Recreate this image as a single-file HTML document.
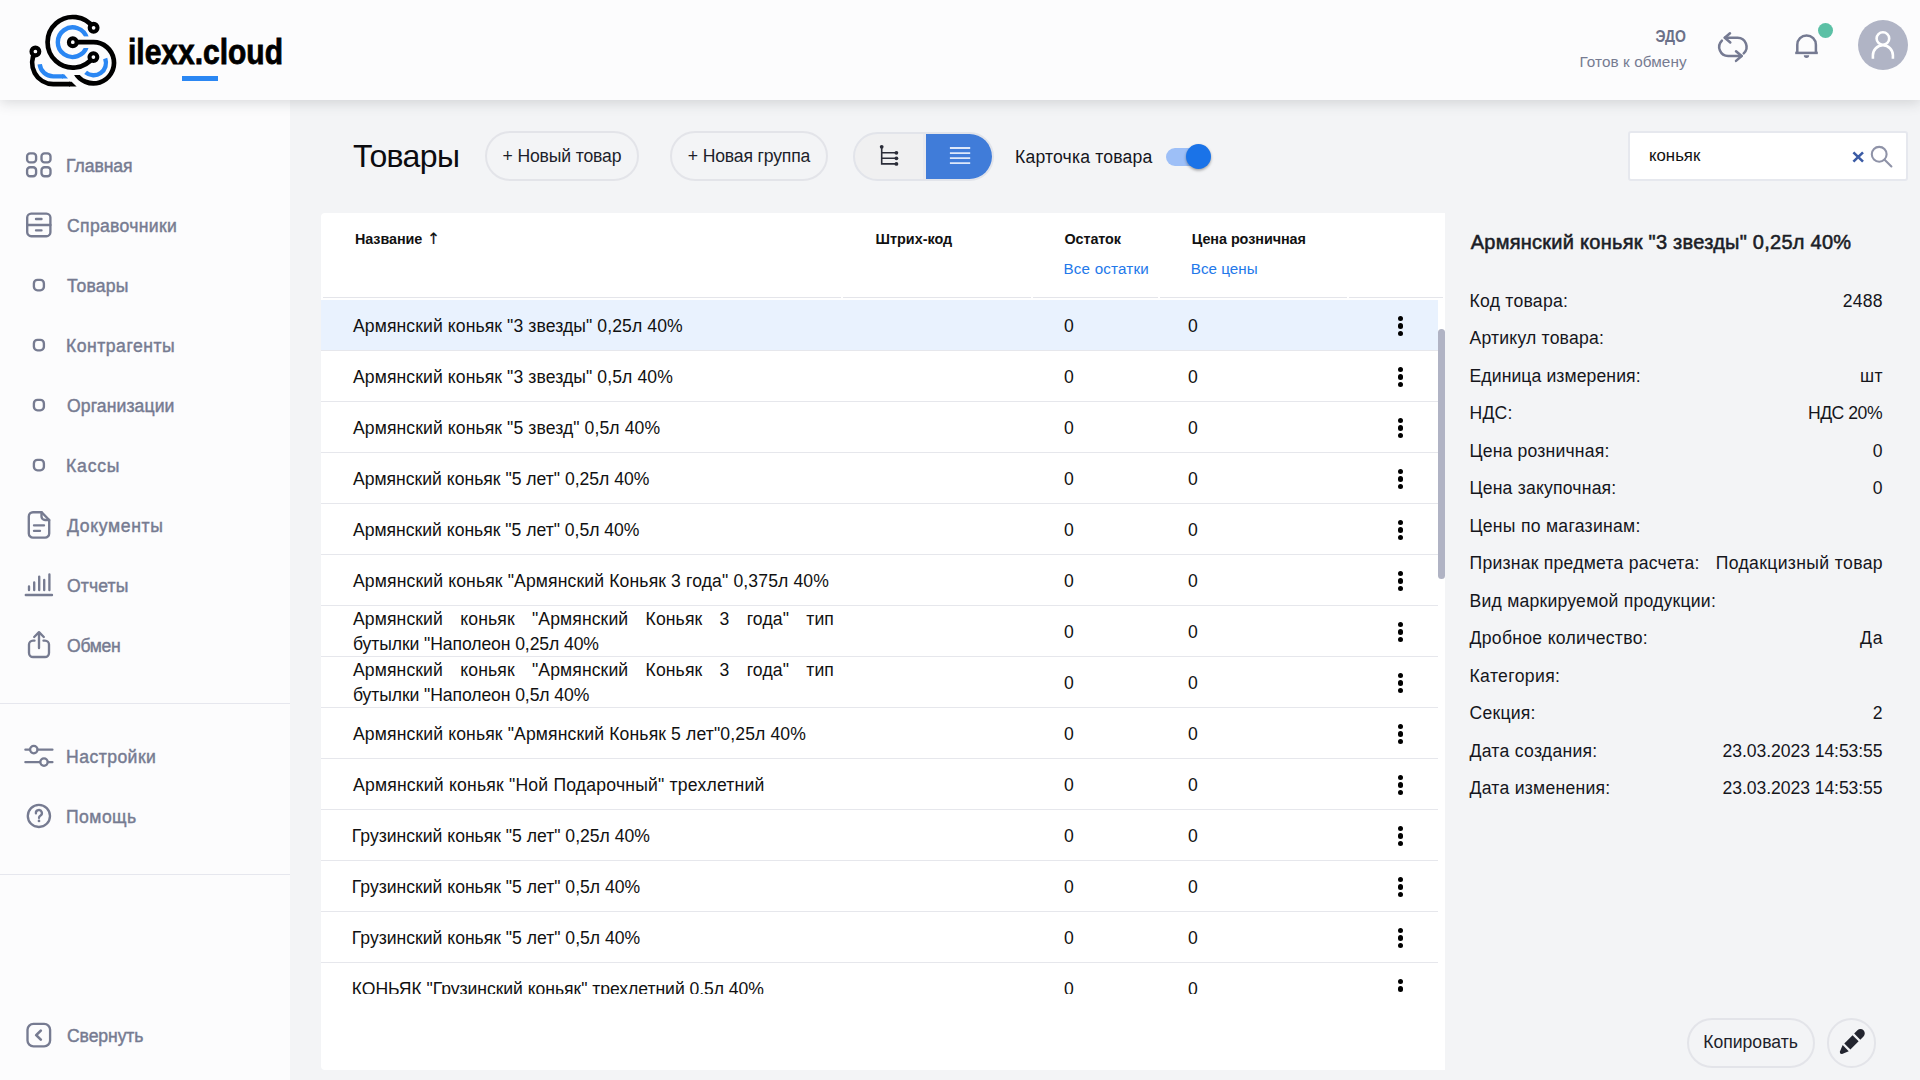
<!DOCTYPE html>
<html lang="ru">
<head>
<meta charset="utf-8">
<title>ilexx.cloud — Товары</title>
<style>
*{box-sizing:border-box;margin:0;padding:0}
html,body{width:1920px;height:1080px;overflow:hidden}
body{font-family:"Liberation Sans",sans-serif;background:#f3f4f6;color:#111;position:relative}
.abs{position:absolute}
.t{position:absolute;white-space:nowrap;line-height:1}
/* header */
#hdr{position:absolute;left:0;top:0;width:1920px;height:100px;background:#fcfcfd;box-shadow:0 3px 12px rgba(50,52,62,.17);z-index:5}
/* sidebar */
#side{position:absolute;left:0;top:100px;width:290px;height:980px;background:#fcfcfd;z-index:2}
.nav{position:absolute;font-size:17.6px;color:#767b91;white-space:nowrap;line-height:1;-webkit-text-stroke:.42px #767b91}
.sep{position:absolute;left:0;width:290px;height:1px;background:#e6e7ee}
.ico{position:absolute;fill:none;stroke:#767b91;stroke-width:2.35;stroke-linecap:round;stroke-linejoin:round;overflow:visible}
/* toolbar */
.pill{position:absolute;border:2px solid #e3e4e9;border-radius:30px}
/* table */
#card{position:absolute;left:321px;top:213px;width:1124px;height:857px;background:#fff;border-radius:4px 0 0 4px}
.th{position:absolute;font-weight:bold;white-space:nowrap;line-height:1;color:#111}
.lnk{position:absolute;color:#2378ea;white-space:nowrap;line-height:1}
#rows{position:absolute;left:0;top:87px;width:1117px;height:694px;overflow:hidden}
.row{position:absolute;left:0;width:1117px;height:51px;border-bottom:1px solid #e6e7ec}
.row.sel{background:#e9f2fe}
.row .n{position:absolute;left:32px;top:.6px;height:50px;width:481px;font-size:17.6px;letter-spacing:.11px;line-height:25px;display:flex;align-items:center;color:#111;white-space:nowrap}
.row .n span{display:block;width:100%}
.row .n .j{text-align:justify;text-align-last:justify;white-space:normal}
.row .n .l2{letter-spacing:-.1px}
.row .a,.row .b{position:absolute;top:1px;height:50px;line-height:50px;font-size:17.6px}
.row .a{left:743px}.row .b{left:867px}
.row .k{position:absolute;left:1076.7px;top:15.9px;width:6px;height:22px}
.row .k i{position:absolute;left:0;width:5.4px;height:5.4px;border-radius:50%;background:#000}
</style>
</head>
<body>
<div id="hdr">
<svg class="abs" style="left:24px;top:8px" width="100" height="84" viewBox="24 8 100 84" fill="none">
 <g stroke="#2b87f3" stroke-width="4.4" fill="none">
  <path d="M86.85 38.2 A14.8 14.8 0 1 0 86.85 46.2"/>
  <path d="M105.2 58.6 A12.4 12.4 0 0 1 85.6 72.4"/>
  <path d="M39.7 64.2 A13.6 13.6 0 0 0 53.2 76.4 H63"/>
 </g>
 <path d="M62 74.2 H64.2 L68 78.6 H62Z" fill="#2b87f3"/>
 <rect x="80" y="36.4" width="14" height="11.6" fill="#fcfcfd"/>
 <g stroke="#000" stroke-width="4.7" fill="none">
  <path d="M93.6 27.8 A25.3 25.3 0 1 0 93.4 57.1"/>
  <path d="M72.8 42.2 H93.4 A20.6 20.6 0 1 1 75 72"/>
  <path d="M35.4 51.5 A21.4 21.4 0 0 0 53.2 84.2 H70"/>
 </g>
 <path d="M69 81.85 H71.6 L76.6 86.55 H69Z" fill="#000"/>
 <rect x="70" y="70.6" width="12" height="4.4" fill="#fcfcfd"/>
 <g fill="#fcfcfd" stroke="#000" stroke-width="4.1">
  <circle cx="93.6" cy="27.8" r="3.9"/>
  <circle cx="93.4" cy="57.1" r="3.9"/>
  <circle cx="72.8" cy="42.2" r="3.9"/>
  <circle cx="35.4" cy="51.5" r="3.9"/>
 </g>
</svg>
<div class="t" id="logo" style="left:128px;top:34.7px;font-size:34.5px;font-weight:bold;color:#000;-webkit-text-stroke:.8px #000;transform-origin:0 0;transform:scaleX(.869)">ilexx.cloud</div>
<div class="abs" style="left:182px;top:76px;width:36px;height:4.5px;background:#2b87f3"></div>
<div class="t" style="right:233.9px;top:29px;font-size:15.6px;transform-origin:100% 50%;transform:scaleX(.9);font-weight:bold;color:#6b7088">ЭДО</div>
<div class="t" style="right:233.3px;top:54px;font-size:15.3px;letter-spacing:.08px;color:#767b91">Готов к обмену</div>
<svg class="abs" style="left:1710px;top:25px" width="46" height="44" viewBox="1710 25 46 44" fill="none" stroke="#757a92" stroke-width="2.5" stroke-linecap="round" stroke-linejoin="round">
 <path d="M1724.8 37.75 H1737.6 A9 9 0 0 1 1743.7 53.3"/><path d="M1730 33.2 L1724.8 37.75 L1730.3 42.5"/>
 <path d="M1741.6 56 H1728.4 A9 9 0 0 1 1721.9 40.6"/><path d="M1736 51.2 L1741.6 56 L1736 60.9"/>
</svg>
<svg class="abs" style="left:1790px;top:28px" width="34" height="36" viewBox="1790 28 34 36" fill="none" stroke="#757a92" stroke-width="2.5" stroke-linejoin="round">
 <path d="M1795.2 52.9 H1817.8"/><path d="M1797.3 52.9 V44.7 A9.3 9.3 0 0 1 1815.9 44.7 V52.9"/>
 <path d="M1803.8 55.2 H1809.2 A2.7 2.7 0 0 1 1803.8 55.2Z" fill="#757a92" stroke="none"/>
</svg>
<div class="abs" style="left:1818px;top:23px;width:15px;height:15px;border-radius:50%;background:#5bc0a5"></div>
<div class="abs" style="left:1858px;top:20px;width:50px;height:50px;border-radius:50%;background:#b0b4c5"></div>
<svg class="abs" style="left:1858px;top:20px" width="50" height="50" viewBox="1858 20 50 50" fill="none" stroke="#fff" stroke-width="2.6">
 <circle cx="1882.9" cy="38.5" r="6.3"/><path d="M1872.9 58.7 V55.3 A10 10 0 0 1 1892.9 55.3 V58.7"/>
</svg>
</div>

<div id="side">
<div class="nav" style="left:66px;top:58.00px;letter-spacing:-0.07px">Главная</div>
<div class="nav" style="left:67px;top:118.00px;letter-spacing:0.33px">Справочники</div>
<div class="nav" style="left:67px;top:178.00px;letter-spacing:0.18px">Товары</div>
<div class="nav" style="left:66px;top:238.00px;letter-spacing:0.5px">Контрагенты</div>
<div class="nav" style="left:67px;top:298.00px;letter-spacing:0.1px">Организации</div>
<div class="nav" style="left:66px;top:358.00px;letter-spacing:0.8px">Кассы</div>
<div class="nav" style="left:67px;top:418.00px;letter-spacing:0.65px">Документы</div>
<div class="nav" style="left:67px;top:478.00px;letter-spacing:0.12px">Отчеты</div>
<div class="nav" style="left:67px;top:538.00px;letter-spacing:-0.3px">Обмен</div>
<div class="nav" style="left:66px;top:649.00px;letter-spacing:0.45px">Настройки</div>
<div class="nav" style="left:66px;top:709.00px;letter-spacing:0.45px">Помощь</div>
<div class="nav" style="left:67px;top:928.00px;letter-spacing:-0.1px">Свернуть</div>
<div class="sep" style="top:603px"></div><div class="sep" style="top:774px"></div>
<svg class="ico" style="left:26px;top:52px" width="26" height="26" viewBox="0 0 26 26" ><rect x="1.1" y="1.4" width="9" height="9" rx="3"/><rect x="15.5" y="1.4" width="9" height="9" rx="3"/><rect x="1.1" y="15.2" width="9" height="9" rx="3"/><rect x="15.5" y="15.2" width="9" height="9" rx="3"/></svg>
<svg class="ico" style="left:26px;top:112px" width="26" height="26" viewBox="0 0 26 26" ><rect x="1.2" y="1.6" width="23.2" height="22.6" rx="4"/><path d="M1.2 13 H24.4 M10 7 H15.5 M10 18.3 H15.5"/></svg>
<svg class="ico" style="left:32px;top:178.2px" width="14" height="14" viewBox="0 0 14 14" ><rect x="1.9" y="1.9" width="10" height="10.4" rx="3.6"/></svg>
<svg class="ico" style="left:32px;top:238.2px" width="14" height="14" viewBox="0 0 14 14" ><rect x="1.9" y="1.9" width="10" height="10.4" rx="3.6"/></svg>
<svg class="ico" style="left:32px;top:298.2px" width="14" height="14" viewBox="0 0 14 14" ><rect x="1.9" y="1.9" width="10" height="10.4" rx="3.6"/></svg>
<svg class="ico" style="left:32px;top:358.2px" width="14" height="14" viewBox="0 0 14 14" ><rect x="1.9" y="1.9" width="10" height="10.4" rx="3.6"/></svg>
<svg class="ico" style="left:26px;top:410px" width="26" height="30" viewBox="0 0 26 30" ><path d="M15.5 2.2 H7 A4.2 4.2 0 0 0 2.8 6.4 V23.4 A4.2 4.2 0 0 0 7 27.6 H19 A4.2 4.2 0 0 0 23.2 23.4 V10 Z"/><path d="M15.5 2.2 V6.5 A3.5 3.5 0 0 0 19 10 H23.2"/><path d="M8 15.3 H18 M8 20.8 H14"/></svg>
<svg class="ico" style="left:24px;top:472px" width="30" height="26" viewBox="0 0 30 26" ><path d="M1.8 23 H28 M5 14.5 V18 M10.2 10.5 V18 M15.2 4.6 V18 M20.2 8 V18 M25.4 2.4 V18"/></svg>
<svg class="ico" style="left:26px;top:530px" width="26" height="30" viewBox="0 0 26 30" ><path d="M8.5 10.6 H7 A4 4 0 0 0 3 14.6 V23 A4 4 0 0 0 7 27 H19 A4 4 0 0 0 23 23 V14.6 A4 4 0 0 0 19 10.6 H17.5"/><path d="M13 18 V2.4 M8.2 7 L13 2.2 L17.8 7"/></svg>
<svg class="ico" style="left:24px;top:642px" width="30" height="28" viewBox="0 0 30 28" ><path d="M1.4 7.6 H5.9 M13.7 7.6 H28.4 M1.4 20.1 H16.1 M23.9 20.1 H28.4"/><circle cx="9.8" cy="7.6" r="3.7"/><circle cx="20" cy="20.1" r="3.7"/></svg>
<svg class="ico" style="left:25px;top:703px" width="28" height="28" viewBox="0 0 28 28" ><circle cx="13.9" cy="12.9" r="11.1"/><path d="M10.9 10.4 A3 3 0 1 1 15.3 12.7 Q14 13.4 14 14.9" stroke-width="2.3"/><path d="M14 17.9 V18" stroke-width="2.7"/></svg>
<svg class="ico" style="left:25px;top:921px" width="28" height="28" viewBox="0 0 28 28" ><rect x="2.5" y="2.8" width="22.6" height="22.6" rx="6"/><path d="M15.8 9.6 L11.2 14.1 L15.8 18.6" stroke-width="2.7"/></svg>
</div>
<div id="main">
<div class="t" style="left:353px;top:140.00px;font-size:32px;letter-spacing:-0.62px;color:#0b0b0f">Товары</div>
<div class="pill" style="left:485px;top:131px;width:154px;height:50px"></div>
<div class="t" style="left:502.5px;top:148.00px;font-size:17.6px;letter-spacing:-0.14px;color:#1d1f2b">+ Новый товар</div>
<div class="pill" style="left:670px;top:131px;width:158px;height:50px"></div>
<div class="t" style="left:687.8px;top:148.00px;font-size:17.6px;letter-spacing:-0.16px;color:#1d1f2b">+ Новая группа</div>
<div class="abs" style="left:853px;top:132px;width:141.4px;height:48.5px;border-radius:24.5px;background:#f0f0f1;border:2px solid #e2e4ea;overflow:hidden"><div class="abs" style="left:67.5px;top:0;width:3.5px;height:48px;background:#e9eaef"></div><div class="abs" style="left:71px;top:0;width:70px;height:48px;background:#407cd9"></div></div>
<svg class="abs" style="left:870px;top:140px" width="36" height="32" viewBox="870 140 36 32" fill="none" stroke="#2a2c38" stroke-width="1.6"><path d="M881.7 147 V163.9 H896.4 M881.7 152.8 H896.4 M881.7 158.3 H896.4"/><g fill="#2a2c38" stroke="none"><circle cx="881.7" cy="146.8" r="1.9"/><circle cx="896.4" cy="152.8" r="1.9"/><circle cx="896.4" cy="158.3" r="1.9"/><circle cx="896.4" cy="163.9" r="1.9"/></g></svg>
<svg class="abs" style="left:940px;top:140px" width="40" height="32" viewBox="940 140 40 32" fill="none" stroke="#dde8fa" stroke-width="1.8"><path d="M949.9 148 H970.2 M949.9 153.1 H970.2 M949.9 158.1 H970.2 M949.9 163.1 H970.2"/></svg>
<div class="t" style="left:1015px;top:149.00px;font-size:17.6px;letter-spacing:0.18px;color:#15161c">Карточка товара</div>
<div class="abs" style="left:1166px;top:148px;width:40px;height:18px;border-radius:9px;background:#9dbff7"></div>
<div class="abs" style="left:1186.2px;top:144px;width:25px;height:25px;border-radius:50%;background:#1a73e8;box-shadow:0 1.5px 3px rgba(0,0,0,.35)"></div>
<div class="abs" style="left:1628px;top:131px;width:280px;height:50px;background:#fff;border:2px solid #e6e8ee;border-radius:3px"></div>
<div class="t" style="left:1649px;top:148.00px;font-size:16.8px;color:#111">коньяк</div>
<svg class="abs" style="left:1848px;top:147px" width="20" height="20" viewBox="1848 147 20 20" stroke="#3b5ba5" stroke-width="2.6" fill="none"><path d="M1853.4 152.4 L1863 161.6 M1863 152.4 L1853.4 161.6"/></svg>
<svg class="abs" style="left:1866px;top:142px" width="30" height="30" viewBox="1866 142 30 30" stroke="#8f93a8" stroke-width="2.1" fill="none" stroke-linecap="round"><circle cx="1879.2" cy="154.3" r="7.4"/><path d="M1884.6 159.7 L1891.4 166.4"/></svg>
<div id="card">
<div class="th" style="left:34px;top:19.00px;font-size:14.4px;letter-spacing:-0.1px">Название</div>
<span class="th" style="left:106px;top:18.8px;font-size:15.6px;-webkit-text-stroke:.15px #111;font-weight:normal;font-family:'DejaVu Sans',sans-serif;color:#111">↑</span>
<div class="th" style="left:554.5px;top:19.00px;font-size:14.4px;letter-spacing:0px">Штрих-код</div>
<div class="th" style="left:743.5px;top:19.00px;font-size:14.4px;letter-spacing:-0.1px">Остаток</div>
<div class="th" style="left:870.8px;top:19.00px;font-size:14.4px;letter-spacing:-0.06px">Цена розничная</div>
<div class="lnk" style="left:742.5px;top:48.00px;font-size:15.2px;letter-spacing:0.19px">Все остатки</div>
<div class="lnk" style="left:869.8px;top:48.00px;font-size:15.2px;letter-spacing:0.03px">Все цены</div>
<div class="abs" style="left:2px;top:84px;width:518px;height:1.2px;background:#e4e5ea"></div>
<div class="abs" style="left:522px;top:84px;width:188px;height:1.2px;background:#e4e5ea"></div>
<div class="abs" style="left:712px;top:84px;width:124.5px;height:1.2px;background:#e4e5ea"></div>
<div class="abs" style="left:839px;top:84px;width:187px;height:1.2px;background:#e4e5ea"></div>
<div class="abs" style="left:1028px;top:84px;width:94px;height:1.2px;background:#e4e5ea"></div>
<div id="rows">
<div class="row sel" style="top:0px"><div class="n" style="top:1.6px;left:32px;letter-spacing:0.09px"><span>Армянский коньяк "3 звезды" 0,25л 40%</span></div><div class="a">0</div><div class="b">0</div><div class="k"><i style="top:0"></i><i style="top:7.4px"></i><i style="top:14.8px"></i></div></div>
<div class="row" style="top:51px"><div class="n" style="top:1.6px;left:32px;letter-spacing:0.09px"><span>Армянский коньяк "3 звезды" 0,5л 40%</span></div><div class="a">0</div><div class="b">0</div><div class="k"><i style="top:0"></i><i style="top:7.4px"></i><i style="top:14.8px"></i></div></div>
<div class="row" style="top:102px"><div class="n" style="top:1.6px;left:32px;letter-spacing:0.09px"><span>Армянский коньяк "5 звезд" 0,5л 40%</span></div><div class="a">0</div><div class="b">0</div><div class="k"><i style="top:0"></i><i style="top:7.4px"></i><i style="top:14.8px"></i></div></div>
<div class="row" style="top:153px"><div class="n" style="top:1.6px;left:32px;letter-spacing:-0.01px"><span>Армянский коньяк "5 лет" 0,25л 40%</span></div><div class="a">0</div><div class="b">0</div><div class="k"><i style="top:0"></i><i style="top:7.4px"></i><i style="top:14.8px"></i></div></div>
<div class="row" style="top:204px"><div class="n" style="top:1.6px;left:32px;letter-spacing:-0.015px"><span>Армянский коньяк "5 лет" 0,5л 40%</span></div><div class="a">0</div><div class="b">0</div><div class="k"><i style="top:0"></i><i style="top:7.4px"></i><i style="top:14.8px"></i></div></div>
<div class="row" style="top:255px"><div class="n" style="top:1.6px;left:32px;letter-spacing:0.125px"><span>Армянский коньяк "Армянский Коньяк 3 года" 0,375л 40%</span></div><div class="a">0</div><div class="b">0</div><div class="k"><i style="top:0"></i><i style="top:7.4px"></i><i style="top:14.8px"></i></div></div>
<div class="row" style="top:306px"><div class="n"><span><span class="j">Армянский коньяк "Армянский Коньяк 3 года" тип</span><span class="l2">бутылки "Наполеон 0,25л 40%</span></span></div><div class="a">0</div><div class="b">0</div><div class="k"><i style="top:0"></i><i style="top:7.4px"></i><i style="top:14.8px"></i></div></div>
<div class="row" style="top:357px"><div class="n"><span><span class="j">Армянский коньяк "Армянский Коньяк 3 года" тип</span><span class="l2">бутылки "Наполеон 0,5л 40%</span></span></div><div class="a">0</div><div class="b">0</div><div class="k"><i style="top:0"></i><i style="top:7.4px"></i><i style="top:14.8px"></i></div></div>
<div class="row" style="top:408px"><div class="n" style="top:1.6px;left:32px;letter-spacing:0.125px"><span>Армянский коньяк "Армянский Коньяк 5 лет"0,25л 40%</span></div><div class="a">0</div><div class="b">0</div><div class="k"><i style="top:0"></i><i style="top:7.4px"></i><i style="top:14.8px"></i></div></div>
<div class="row" style="top:459px"><div class="n" style="top:1.6px;left:32px;letter-spacing:0.2px"><span>Армянский коньяк "Ной Подарочный" трехлетний</span></div><div class="a">0</div><div class="b">0</div><div class="k"><i style="top:0"></i><i style="top:7.4px"></i><i style="top:14.8px"></i></div></div>
<div class="row" style="top:510px"><div class="n" style="top:1.6px;left:30.8px;letter-spacing:-0.01px"><span>Грузинский коньяк "5 лет" 0,25л 40%</span></div><div class="a">0</div><div class="b">0</div><div class="k"><i style="top:0"></i><i style="top:7.4px"></i><i style="top:14.8px"></i></div></div>
<div class="row" style="top:561px"><div class="n" style="top:1.6px;left:30.8px;letter-spacing:-0.01px"><span>Грузинский коньяк "5 лет" 0,5л 40%</span></div><div class="a">0</div><div class="b">0</div><div class="k"><i style="top:0"></i><i style="top:7.4px"></i><i style="top:14.8px"></i></div></div>
<div class="row" style="top:612px"><div class="n" style="top:1.6px;left:30.8px;letter-spacing:-0.01px"><span>Грузинский коньяк "5 лет" 0,5л 40%</span></div><div class="a">0</div><div class="b">0</div><div class="k"><i style="top:0"></i><i style="top:7.4px"></i><i style="top:14.8px"></i></div></div>
<div class="row" style="top:663px"><div class="n" style="top:1.6px;left:30.8px;letter-spacing:-0.05px"><span>КОНЬЯК "Грузинский коньяк" трехлетний 0,5л 40%</span></div><div class="a">0</div><div class="b">0</div><div class="k"><i style="top:0"></i><i style="top:7.4px"></i><i style="top:14.8px"></i></div></div>
</div>
<div class="abs" style="left:1117px;top:116px;width:7px;height:250px;border-radius:4px;background:#b0b3c4"></div>
</div>
<div class="t" style="left:1470.7px;top:232.00px;font-size:20px;letter-spacing:0.26px;color:#1b1d26;-webkit-text-stroke:.55px #1b1d26">Армянский коньяк "3 звезды" 0,25л 40%</div>
<div class="t" style="left:1469.5px;top:293.00px;font-size:17.6px;letter-spacing:0.25px;color:#15161c">Код товара:</div>
<div class="t" style="right:37.20000000000009px;top:293.00px;font-size:17.6px;letter-spacing:0.2px;color:#15161c">2488</div>
<div class="t" style="left:1469.5px;top:330.00px;font-size:17.6px;letter-spacing:0.2px;color:#15161c">Артикул товара:</div>
<div class="t" style="left:1469.5px;top:368.00px;font-size:17.6px;letter-spacing:0.1px;color:#15161c">Единица измерения:</div>
<div class="t" style="right:36.90000000000009px;top:368.00px;font-size:17.6px;letter-spacing:0.5px;color:#15161c">шт</div>
<div class="t" style="left:1469.5px;top:405.00px;font-size:17.6px;letter-spacing:0.23px;color:#15161c">НДС:</div>
<div class="t" style="right:37.850000000000094px;top:405.00px;font-size:17.6px;letter-spacing:-0.45px;color:#15161c">НДС 20%</div>
<div class="t" style="left:1469.5px;top:443.00px;font-size:17.6px;letter-spacing:0.18px;color:#15161c">Цена розничная:</div>
<div class="t" style="right:37.40000000000009px;top:443.00px;font-size:17.6px;color:#15161c">0</div>
<div class="t" style="left:1469.5px;top:480.00px;font-size:17.6px;letter-spacing:0.2px;color:#15161c">Цена закупочная:</div>
<div class="t" style="right:37.40000000000009px;top:480.00px;font-size:17.6px;color:#15161c">0</div>
<div class="t" style="left:1469.5px;top:518.00px;font-size:17.6px;letter-spacing:0.28px;color:#15161c">Цены по магазинам:</div>
<div class="t" style="left:1469.5px;top:555.00px;font-size:17.6px;letter-spacing:0.23px;color:#15161c">Признак предмета расчета:</div>
<div class="t" style="right:37.04000000000009px;top:555.00px;font-size:17.6px;letter-spacing:0.36px;color:#15161c">Подакцизный товар</div>
<div class="t" style="left:1469.5px;top:593.00px;font-size:17.6px;letter-spacing:0.23px;color:#15161c">Вид маркируемой продукции:</div>
<div class="t" style="left:1469.5px;top:630.00px;font-size:17.6px;letter-spacing:0.3px;color:#15161c">Дробное количество:</div>
<div class="t" style="right:36.50000000000009px;top:630.00px;font-size:17.6px;letter-spacing:0.9px;color:#15161c">Да</div>
<div class="t" style="left:1469.5px;top:668.00px;font-size:17.6px;letter-spacing:0.37px;color:#15161c">Категория:</div>
<div class="t" style="left:1469.5px;top:705.00px;font-size:17.6px;letter-spacing:0.23px;color:#15161c">Секция:</div>
<div class="t" style="right:37.40000000000009px;top:705.00px;font-size:17.6px;color:#15161c">2</div>
<div class="t" style="left:1469.5px;top:743.00px;font-size:17.6px;letter-spacing:0.28px;color:#15161c">Дата создания:</div>
<div class="t" style="right:37.48000000000009px;top:743.00px;font-size:17.6px;letter-spacing:-0.08px;color:#15161c">23.03.2023 14:53:55</div>
<div class="t" style="left:1469.5px;top:780.00px;font-size:17.6px;letter-spacing:0.26px;color:#15161c">Дата изменения:</div>
<div class="t" style="right:37.48000000000009px;top:780.00px;font-size:17.6px;letter-spacing:-0.08px;color:#15161c">23.03.2023 14:53:55</div>
<div class="pill" style="left:1687px;top:1018px;width:128px;height:50px"></div>
<div class="t" style="left:1703.2px;top:1034.00px;font-size:17.6px;color:#1d1f2b">Копировать</div>
<div class="pill" style="left:1827px;top:1018px;width:49px;height:50px"></div>
<svg class="abs" style="left:1834px;top:1024px" width="36" height="36" viewBox="1834 1024 36 36" fill="#23252f"><g transform="translate(1851.85 1042) rotate(45)"><path d="M-4.3 -7.6 V-12.2 A4.3 4.3 0 0 1 4.3 -12.2 V-7.6Z"/><path d="M-4.3 -5.3 H4.3 V6.4 H-4.3Z"/><path d="M-4.3 8.7 H4.3 L1.6 15.4 Q0 17.3 -1.6 15.4Z"/></g></svg>
</div>
</body>
</html>
